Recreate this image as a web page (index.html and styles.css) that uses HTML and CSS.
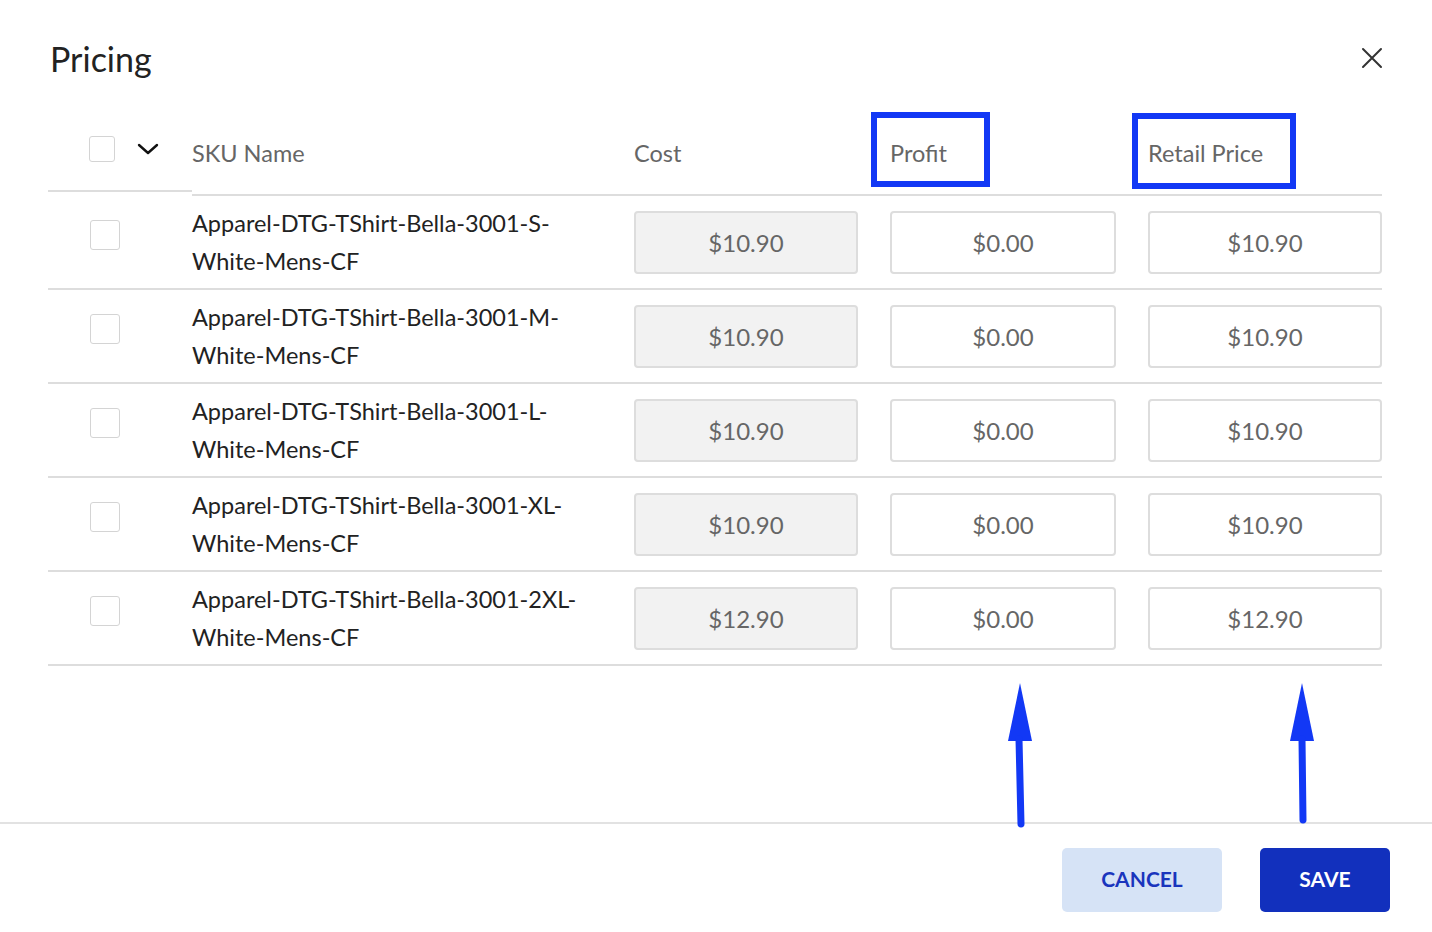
FILE: index.html
```html
<!DOCTYPE html>
<html lang="en">
<head>
  <meta charset="UTF-8" />
  <title>Pricing</title>
  <link rel="stylesheet" href="styles.css">
</head>
<body>
  <div class="modal">
    <div class="modal-head">
      <h2>Pricing</h2>
      <button class="close" aria-label="Close">
        <svg width="22" height="22" viewBox="0 0 22 22"><path d="M2 2L20 20M20 2L2 20" stroke="#333" stroke-width="2" stroke-linecap="round"/></svg>
      </button>
    </div>

    <div class="table">
      <div class="thead">
        <div class="th th-check">
          <span class="box small"></span>
          <svg class="chev" width="22" height="14" viewBox="0 0 22 14"><path d="M2 3L11 11L20 3" fill="none" stroke="#111" stroke-width="2.4" stroke-linecap="round" stroke-linejoin="round"/></svg>
        </div>
        <div class="th">SKU Name</div>
        <div class="th">Cost</div>
        <div class="th">Profit</div>
        <div class="th">Retail Price</div>
      </div>
      <div id="rows"></div>
    </div>

    <div class="modal-foot">
      <button class="btn cancel">CANCEL</button>
      <button class="btn save">SAVE</button>
    </div>

    <!-- annotations -->
    <div class="mark mark-profit"></div>
    <div class="mark mark-retail"></div>
    <svg class="arrow arrow-1" width="30" height="146" viewBox="0 0 30 146"><path d="M15 0L27 58L3 58Z" fill="#1238f5"/><path d="M14 56L16 141" stroke="#1238f5" stroke-width="7" stroke-linecap="round"/></svg>
    <svg class="arrow arrow-2" width="30" height="146" viewBox="0 0 30 146"><path d="M13 0L25 58L1 58Z" fill="#1238f5"/><path d="M13 56L14 137" stroke="#1238f5" stroke-width="7" stroke-linecap="round"/></svg>
  </div>

  <script>
    var skus = [
      ['Apparel-DTG-TShirt-Bella-3001-S-', '10.90'],
      ['Apparel-DTG-TShirt-Bella-3001-M-', '10.90'],
      ['Apparel-DTG-TShirt-Bella-3001-L-', '10.90'],
      ['Apparel-DTG-TShirt-Bella-3001-XL-', '10.90'],
      ['Apparel-DTG-TShirt-Bella-3001-2XL-', '12.90']
    ];
    var rows = document.getElementById('rows');
    skus.forEach(function (s) {
      var row = document.createElement('div');
      row.className = 'tr';
      row.innerHTML =
        '<div class="td td-check"><span class="box"></span></div>' +
        '<div class="td name">' + s[0] + '<br>White-Mens-CF</div>' +
        '<div class="td"><div class="field cost">$' + s[1] + '</div></div>' +
        '<div class="td"><div class="field profit">$0.00</div></div>' +
        '<div class="td"><div class="field retail">$' + s[1] + '</div></div>';
      rows.appendChild(row);
    });
  </script>
</body>
</html>
```

FILE: styles.css
```css
body {
  margin: 0;
  font-family: Lato, 'Noto Sans', sans-serif;
  background: #fff;
  color: #222;
}
.modal {
  position: relative;
  height: 932px;
  display: flex;
  flex-direction: column;
}
.modal-head {
  display: flex;
  justify-content: space-between;
  align-items: center;
  padding: 34px 49px 0 50px;
  height: 48px;
}
.modal-head h2 {
  margin: 0;
  font-size: 34px;
  font-weight: 400;
  color: #222;
}
.close {
  background: none;
  border: none;
  padding: 0;
  margin-top: 2px;
  cursor: pointer;
}
.table {
  margin: 28px 50px 0 48px;
  flex-grow: 1;
}
.thead, .tr {
  display: grid;
  grid-template-columns: 144px 442px 256px 258px 234px;
}
.th {
  height: 86px;
  display: flex;
  align-items: center;
  padding-top: 2px;
  box-sizing: border-box;
  font-size: 23.5px;
  color: #666;
  border-bottom: 2px solid #ddd;
}
.th-check {
  height: 82px;
  padding-left: 41px;
  gap: 22px;
}
.chev {
  margin-top: -4px;
}
.box {
  display: inline-block;
  width: 28px;
  height: 28px;
  border: 1.5px solid #d4d4d4;
  border-radius: 3px;
  box-sizing: border-box;
  background: #fff;
}
.box.small {
  width: 26px;
  height: 26px;
  margin-top: -4px;
}
.tr {
  height: 94px;
  box-sizing: border-box;
  border-bottom: 2px solid #ddd;
}
.td {
  display: flex;
  align-items: center;
}
.td-check {
  padding-left: 42px;
}
.td-check .box {
  width: 30px;
  height: 30px;
  margin-top: -14px;
}
.name {
  font-size: 23.5px;
  line-height: 38px;
  color: #222;
}
.field {
  height: 63px;
  border: 2px solid #ddd;
  border-radius: 4px;
  box-sizing: border-box;
  display: flex;
  align-items: center;
  justify-content: center;
  font-size: 24px;
  color: #666;
  background: #fff;
}
.field.cost {
  width: 224px;
  background: #f2f2f2;
}
.field.profit {
  width: 226px;
}
.field.retail {
  width: 234px;
}
.modal-foot {
  border-top: 2px solid #e2e2e2;
  display: flex;
  justify-content: flex-end;
  gap: 38px;
  padding: 24px 42px 20px;
}
.btn {
  height: 64px;
  padding: 0 0 4px;
  border: none;
  border-radius: 5px;
  font-family: Lato, 'Noto Sans', sans-serif;
  font-size: 21px;
  font-weight: 700;
  cursor: pointer;
}
.cancel {
  width: 160px;
  background: #d6e3f6;
  color: #1a35bd;
}
.save {
  width: 130px;
  background: #1230bd;
  color: #fff;
}
.mark {
  position: absolute;
  border: 6px solid #1238f5;
  box-sizing: border-box;
}
.mark-profit {
  left: 871px;
  top: 112px;
  width: 119px;
  height: 75px;
}
.mark-retail {
  left: 1132px;
  top: 113px;
  width: 164px;
  height: 76px;
}
.arrow {
  position: absolute;
}
.arrow-1 {
  left: 1005px;
  top: 683px;
}
.arrow-2 {
  left: 1289px;
  top: 683px;
}
```
